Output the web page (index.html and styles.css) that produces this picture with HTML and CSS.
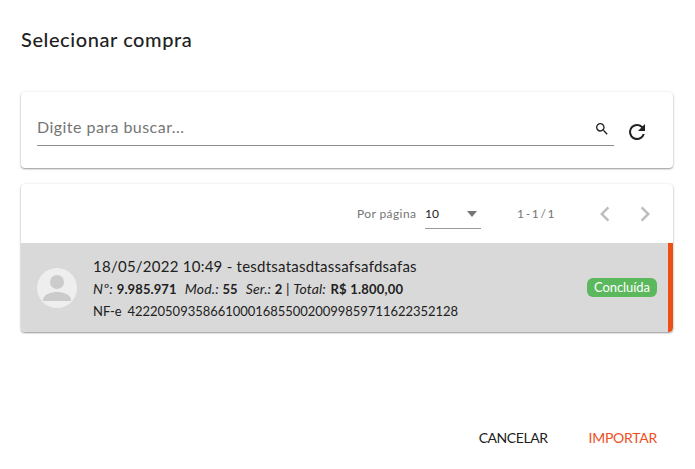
FILE: index.html
```html
<!DOCTYPE html>
<html lang="pt-BR">
<head>
<meta charset="utf-8">
<title>Selecionar compra</title>
<link rel="stylesheet" href="styles.css">
</head>
<body>
<div class="dialog">
  <h1 class="title">Selecionar compra</h1>
  <section class="card search-card">
    <div class="search-field">
      <span class="placeholder">Digite para buscar...</span>
      <svg class="search-icon" viewBox="0 0 24 24"><path d="M15.5 14h-.79l-.28-.27A6.47 6.47 0 0 0 16 9.5 6.5 6.5 0 1 0 9.5 16c1.61 0 3.09-.59 4.23-1.57l.27.28v.79l5 4.99L20.49 19l-4.99-5zm-6 0C7.01 14 5 11.99 5 9.5S7.01 5 9.5 5 14 7.01 14 9.5 11.99 14 9.5 14z"/></svg>
    </div>
    <svg class="refresh-icon" viewBox="0 0 24 24"><path d="M17.65 6.35A7.96 7.96 0 0 0 12 4a8 8 0 1 0 7.73 10h-2.08A6 6 0 1 1 12 6c1.66 0 3.14.69 4.22 1.78L13 11h7V4l-2.35 2.35z"/></svg>
  </section>
  <section class="card list-card">
    <div class="pager">
      <span class="per-page">Por página</span>
      <div class="select"><span>10</span><i class="caret"></i></div>
      <span class="range">1 - 1 / 1</span>
      <svg class="chev" viewBox="0 0 24 24"><path d="M15.41 7.41 14 6l-6 6 6 6 1.41-1.41L10.83 12z"/></svg>
      <svg class="chev" viewBox="0 0 24 24"><path d="M10 6 8.59 7.41 13.17 12l-4.58 4.59L10 18l6-6z"/></svg>
    </div>
    <div class="row">
      <div class="avatar">
        <svg viewBox="0 0 40 40"><circle cx="20" cy="14" r="7"/><path d="M6 32c0-6 9-8 14-8s14 2 14 8v1H6z"/></svg>
      </div>
      <div class="info">
        <div class="line-main">18/05/2022 10:49 - tesdtsatasdtassafsafdsafas</div>
        <div class="line-meta"><em class="no">Nº:</em> <b>9.985.971</b> <em class="gap">Mod.:</em> <b>55</b> <em class="gap">Ser.:</em> <b>2</b> | <em>Total:</em> <b class="total">R$ 1.800,00</b></div>
        <div class="line-nf">NF-e 42220509358661000168550020099859711622352128</div>
      </div>
      <span class="badge">Concluída</span>
    </div>
  </section>
  <footer class="actions">
    <span class="btn">CANCELAR</span>
    <span class="btn primary">IMPORTAR</span>
  </footer>
</div>
</body>
</html>
```
FILE: styles.css
```css
* { box-sizing: border-box; }
html, body { margin: 0; height: 100%; background: #fff; }
body { font-family: "Lato", "Liberation Sans", sans-serif; color: #212121; overflow: hidden; }
.dialog { width: 695px; height: 469px; padding: 26px 22px 0 21px; display: flex; flex-direction: column; }
.title { margin: 0; font-size: 20px; font-weight: 500; line-height: 27px; letter-spacing: .58px; height: 66px; }
.card { background: #fff; border-radius: 4px; box-shadow: 0 1px 2px rgba(0,0,0,.4), 0 0 3px rgba(0,0,0,.06); }
.search-card { height: 76px; display: flex; align-items: flex-start; padding: 24px 16px 0; }
.search-field { width: 577px; height: 30px; border-bottom: 1px solid #8c8c8c; display: flex; align-items: center; justify-content: space-between; }
.placeholder { font-size: 16px; line-height: 20px; color: #757575; letter-spacing: .46px; margin-top: -7px; }
.search-icon { width: 16px; height: 16px; margin-right: 4px; margin-top: -3px; fill: #212121; }
.refresh-icon { width: 24px; height: 24px; margin-left: 11px; margin-top: 4px; fill: #212121; }
.list-card { margin-top: 16px; height: 148px; overflow: hidden; }
.pager { height: 59px; display: flex; align-items: center; font-size: 12px; color: #757575; padding-left: 336px; }
.per-page { width: 68px; letter-spacing: .4px; }
.select { width: 56px; height: 30px; border-bottom: 1px solid #9a9a9a; display: flex; align-items: center; justify-content: space-between; color: #212121; padding: 0 2px 0 0; margin-top: 1px; }
.caret { border: 5.5px solid transparent; border-top: 6px solid #757575; border-bottom: 0; margin-right: 2px; }
.range { margin-left: 36px; width: 36px; white-space: nowrap; letter-spacing: -.7px; }
.chev { width: 30px; height: 30px; fill: #bdbdbd; margin-right: 10px; }
.range + .chev { margin-left: 37px; }
.row { height: 89px; background: #d9d9d9; border-right: 5px solid #f04e17; display: flex; align-items: center; padding-left: 16px; padding-right: 11px; border-radius: 0 0 4px 4px; }
.avatar { width: 40px; height: 40px; border-radius: 50%; background: #eeeeee; flex: none; }
.avatar svg { display: block; width: 40px; height: 40px; fill: #cbcbcb; }
.info { margin-left: 16px; flex: 1; min-width: 0; padding-top: 2px; }
.line-main { font-size: 15px; line-height: 20px; letter-spacing: .25px; margin-bottom: 1px; }
.line-meta { font-size: 14px; line-height: 24px; }
.line-meta b { font-weight: 700; font-size: 13px; letter-spacing: .1px; }
.line-meta em { letter-spacing: .15px; }
.line-meta .no { letter-spacing: .5px; }
.line-meta .gap { margin-left: 4.5px; }
.line-meta .total { margin-left: 1px; letter-spacing: .2px; }
.line-nf { font-size: 13px; line-height: 21px; letter-spacing: -.03px; word-spacing: 2.6px; }
.badge { height: 19px; padding: 0 7px; background: #5cb85c; color: #fff; border-radius: 6px; font-size: 13px; line-height: 19px; margin-left: 1px; letter-spacing: -.05px; }
.actions { margin-top: 96px; display: flex; justify-content: flex-end; gap: 41px; padding-right: 16px; font-size: 14px; line-height: 20px; letter-spacing: -.45px; }
.btn { color: #212121; }
.primary { color: #f04e23; letter-spacing: -.25px; }
```
